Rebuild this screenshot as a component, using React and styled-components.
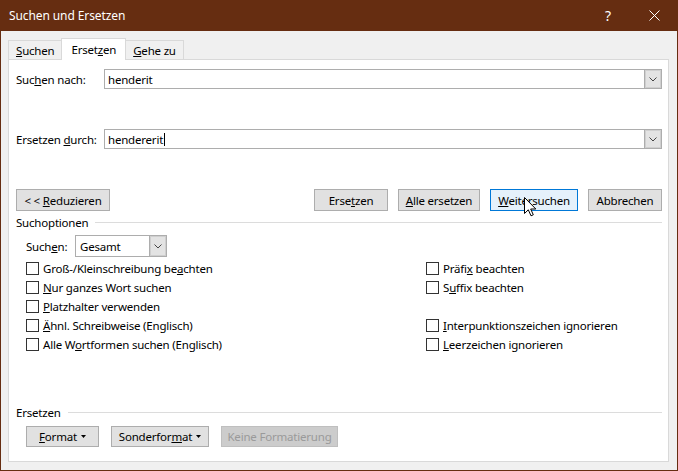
import styled, { createGlobalStyle } from "styled-components";

const GlobalStyle = createGlobalStyle`
  html, body {
    margin: 0;
    padding: 0;
    background: #f0f0f0;
  }
  body {
    font-family: "Noto Sans", "Open Sans", sans-serif;
    font-size: 11.5px;
    letter-spacing: -0.2px;
    color: #000;
  }
`;

const Window = styled.div`
  position: relative;
  width: 678px;
  height: 471px;
  box-sizing: border-box;
  border: 1px solid #662d11;
  border-top: none;
  background: #f0f0f0;
  display: flex;
  flex-direction: column;
  overflow: hidden;
`;

const TitleBar = styled.div`
  height: 31px;
  flex: none;
  display: flex;
  align-items: center;
  background: #662d11;
  color: #fff;
`;

const Title = styled.div`
  flex: 1;
  padding-left: 8px;
  font-size: 12px;
  letter-spacing: -0.1px;
`;

const CaptionButton = styled.div`
  width: 46px;
  height: 31px;
  display: flex;
  align-items: center;
  justify-content: center;
  font-size: 14px;
`;

const Body = styled.div`
  flex: 1;
  display: flex;
  flex-direction: column;
  padding: 7px 8px 8px 7px;
`;

const TabStrip = styled.div`
  height: 21px;
  display: flex;
  align-items: flex-end;
`;

const Tab = styled.div`
  position: relative;
  box-sizing: border-box;
  height: ${(p) => (p.$active ? 22 : 19)}px;
  margin-bottom: ${(p) => (p.$active ? -1 : 0)}px;
  margin-left: ${(p) => (p.$first ? 0 : -1)}px;
  padding: ${(p) => (p.$active ? "0 9px" : "0 7px")};
  display: flex;
  align-items: center;
  border: 1px solid #d9d9d9;
  border-bottom: none;
  background: ${(p) => (p.$active ? "#fff" : "#f0f0f0")};
  z-index: ${(p) => (p.$active ? 2 : 1)};
`;

const Panel = styled.div`
  flex: 1;
  display: flex;
  flex-direction: column;
  background: #fff;
  border: 1px solid #d9d9d9;
  padding: 0 6px 14px 7px;
`;

const Key = styled.u`
  text-decoration: underline;
  text-underline-offset: 1px;
`;

const FieldRow = styled.div`
  display: flex;
  align-items: center;
  height: 20px;
  margin-top: ${(p) => p.$mt}px;
`;

const FieldLabel = styled.div`
  width: ${(p) => p.$w || 88}px;
  flex: none;
`;

const Combo = styled.div`
  flex: ${(p) => (p.$w ? "none" : 1)};
  width: ${(p) => (p.$w ? `${p.$w}px` : "auto")};
  height: ${(p) => p.$h || 20}px;
  box-sizing: border-box;
  display: flex;
  border: 1px solid #adadad;
  background: #fff;
`;

const ComboText = styled.div`
  flex: 1;
  display: flex;
  align-items: center;
  padding-left: ${(p) => p.$pad || 3}px;
`;

const Caret = styled.span`
  display: inline-block;
  width: 1px;
  height: 13px;
  background: #000;
  margin-left: 1px;
`;

const DropButton = styled.div`
  width: 16px;
  display: flex;
  align-items: center;
  justify-content: center;
  background: #e3e3e3;
  border-left: 1px solid #adadad;
  box-shadow: inset 0 0 0 1px #cfcfcf;
`;

const ButtonRow = styled.div`
  display: flex;
  justify-content: space-between;
  margin-top: 40px;
`;

const ButtonGroup = styled.div`
  display: flex;
  gap: ${(p) => p.$gap || 10}px;
  padding-left: ${(p) => p.$indent || 0}px;
  margin-top: ${(p) => p.$mt || 0}px;
`;

const Button = styled.div`
  box-sizing: border-box;
  width: ${(p) => p.$w}px;
  height: ${(p) => p.$h || 22}px;
  display: flex;
  align-items: center;
  justify-content: center;
  gap: 4px;
  white-space: pre;
  border: 1px solid ${(p) => (p.$default ? "#0078d7" : p.$disabled ? "#bfbfbf" : "#adadad")};
  background: ${(p) => (p.$default ? "#e5f1fb" : p.$disabled ? "#cccccc" : "#e1e1e1")};
  color: ${(p) => (p.$disabled ? "#9a9a9a" : "#000")};
`;

const SectionHeading = styled.div`
  display: flex;
  align-items: center;
  gap: 7px;
  height: 16px;
  margin-top: ${(p) => p.$mt}px;
  &::after {
    content: "";
    flex: 1;
    height: 1px;
    background: #dcdcdc;
  }
`;

const OptionsRow = styled.div`
  display: flex;
  align-items: center;
  height: 22px;
  margin-top: 5px;
  padding-left: 10px;
`;

const CheckGrid = styled.div`
  display: grid;
  grid-template-columns: 400px 1fr;
  grid-auto-rows: 19px;
  margin-top: 2px;
  padding-left: 10px;
`;

const CheckItem = styled.div`
  display: flex;
  align-items: center;
  gap: 4px;
`;

const Box = styled.span`
  width: 13px;
  height: 13px;
  box-sizing: border-box;
  border: 1px solid #333;
  background: #fff;
  flex: none;
`;

const Bottom = styled.div`
  margin-top: auto;
`;

const Cursor = styled.svg`
  position: absolute;
  left: 523px;
  top: 197px;
`;

const Chevron = () => (
  <svg width="8" height="5" viewBox="0 0 8 5">
    <path d="M0.5 0.5 L4 4 L7.5 0.5" fill="none" stroke="#444" strokeWidth="1" />
  </svg>
);

const Arrow = () => (
  <svg width="5" height="3" viewBox="0 0 5 3">
    <path d="M0 0 L5 0 L2.5 3 Z" fill="#000" />
  </svg>
);

const Check = ({ children }) => (
  <CheckItem>
    <Box />
    <span>{children}</span>
  </CheckItem>
);

export default function App() {
  return (
    <>
      <GlobalStyle />
      <Window>
        <TitleBar>
          <Title>Suchen und Ersetzen</Title>
          <CaptionButton>?</CaptionButton>
          <CaptionButton>
            <svg width="11" height="11" viewBox="0 0 11 11">
              <path d="M0.5 0.5 L10.5 10.5 M10.5 0.5 L0.5 10.5" stroke="#fff" strokeWidth="1" />
            </svg>
          </CaptionButton>
        </TitleBar>
        <Body>
          <TabStrip>
            <Tab $first>
              <Key>S</Key>uchen
            </Tab>
            <Tab $active>
              Erset<Key>z</Key>en
            </Tab>
            <Tab>
              <Key>G</Key>ehe zu
            </Tab>
          </TabStrip>
          <Panel>
            <FieldRow $mt={9}>
              <FieldLabel>
                Suc<Key>h</Key>en nach:
              </FieldLabel>
              <Combo>
                <ComboText>henderit</ComboText>
                <DropButton>
                  <Chevron />
                </DropButton>
              </Combo>
            </FieldRow>
            <FieldRow $mt={40}>
              <FieldLabel>
                Ersetzen <Key>d</Key>urch:
              </FieldLabel>
              <Combo>
                <ComboText>
                  hendererit
                  <Caret />
                </ComboText>
                <DropButton>
                  <Chevron />
                </DropButton>
              </Combo>
            </FieldRow>
            <ButtonRow>
              <Button $w={94}>
                <span>
                  {"< < "}
                  <Key>R</Key>eduzieren
                </span>
              </Button>
              <ButtonGroup>
                <Button $w={74}>
                  <span>
                    Erse<Key>t</Key>zen
                  </span>
                </Button>
                <Button $w={82}>
                  <span>
                    <Key>A</Key>lle ersetzen
                  </span>
                </Button>
                <Button $w={88} $default>
                  <span>
                    <Key>W</Key>eitersuchen
                  </span>
                </Button>
                <Button $w={74}>Abbrechen</Button>
              </ButtonGroup>
            </ButtonRow>
            <SectionHeading $mt={3}>Suchoptionen</SectionHeading>
            <OptionsRow>
              <FieldLabel $w={49}>
                Such<Key>e</Key>n:
              </FieldLabel>
              <Combo $w={92} $h={22}>
                <ComboText $pad={4}>Gesamt</ComboText>
                <DropButton>
                  <Chevron />
                </DropButton>
              </Combo>
            </OptionsRow>
            <CheckGrid>
              <Check>
                Groß-/Kleinschreibung be<Key>a</Key>chten
              </Check>
              <Check>
                Präfi<Key>x</Key> beachten
              </Check>
              <Check>
                <Key>N</Key>ur ganzes Wort suchen
              </Check>
              <Check>
                S<Key>u</Key>ffix beachten
              </Check>
              <Check>
                <Key>P</Key>latzhalter verwenden
              </Check>
              <div />
              <Check>
                <Key>Ä</Key>hnl. Schreibweise (Englisch)
              </Check>
              <Check>
                <Key>I</Key>nterpunktionszeichen ignorieren
              </Check>
              <Check>
                Alle W<Key>o</Key>rtformen suchen (Englisch)
              </Check>
              <Check>
                <Key>L</Key>eerzeichen ignorieren
              </Check>
            </CheckGrid>
            <Bottom>
              <SectionHeading $mt={0}>Ersetzen</SectionHeading>
              <ButtonGroup $gap={12} $indent={10} $mt={6}>
                <Button $w={73} $h={21}>
                  <span>
                    <Key>F</Key>ormat
                  </span>
                  <Arrow />
                </Button>
                <Button $w={98} $h={21}>
                  <span>
                    Sonderfor<Key>m</Key>at
                  </span>
                  <Arrow />
                </Button>
                <Button $w={117} $h={21} $disabled>
                  Keine Formatierung
                </Button>
              </ButtonGroup>
            </Bottom>
          </Panel>
        </Body>
        <Cursor width="13" height="20" viewBox="0 0 13 20">
          <path
            d="M0.5 0.5 L0.5 16.5 L4.3 12.8 L7 18.8 L9.3 17.8 L6.7 12 L11.8 12 Z"
            fill="#fff"
            stroke="#000"
            strokeWidth="1"
            strokeLinejoin="miter"
          />
        </Cursor>
      </Window>
    </>
  );
}
